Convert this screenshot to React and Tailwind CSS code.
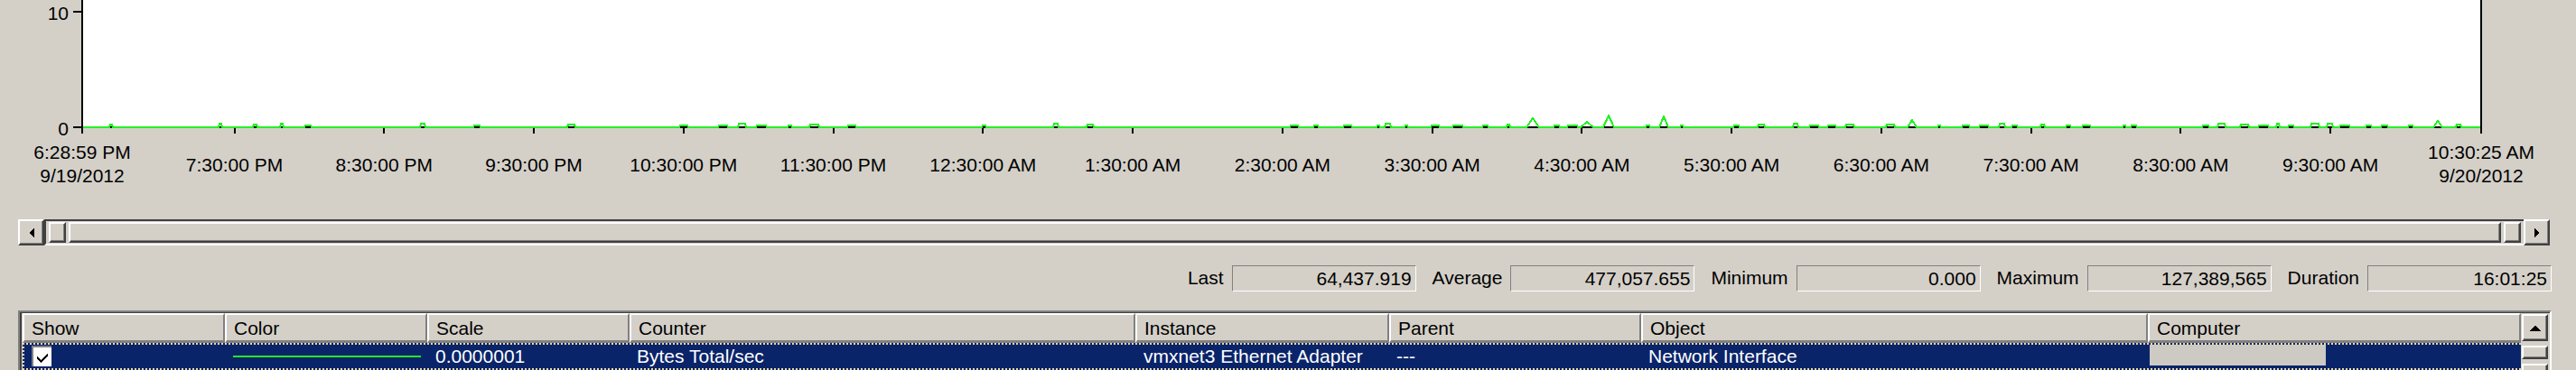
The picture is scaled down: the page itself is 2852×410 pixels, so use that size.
import React from 'react';

// time axis: 6:28:59 PM 9/19/2012 -> 10:30:25 AM 9/20/2012
const X0 = 91;
const X1 = 2747;
const SPAN = 57686;
const toX = (sec) => X0 + (sec / SPAN) * (X1 - X0);

const hours = [
  '7:30:00 PM', '8:30:00 PM', '9:30:00 PM', '10:30:00 PM', '11:30:00 PM',
  '12:30:00 AM', '1:30:00 AM', '2:30:00 AM', '3:30:00 AM', '4:30:00 AM',
  '5:30:00 AM', '6:30:00 AM', '7:30:00 AM', '8:30:00 AM', '9:30:00 AM',
];
const ticks = hours.map((label, k) => ({ label, x: toX(3661 + k * 3600) }));

const stats = [
  ['Last', '64,437.919'],
  ['Average', '477,057.655'],
  ['Minimum', '0.000'],
  ['Maximum', '127,389,565'],
  ['Duration', '16:01:25'],
];

const cols = [
  ['Show', 224], ['Color', 224], ['Scale', 224], ['Counter', 560],
  ['Instance', 281], ['Parent', 279], ['Object', 561], ['Computer', 413],
];

function makeRng(seed) {
  let s = seed;
  return () => {
    s = (s * 1664525 + 1013904223) % 4294967296;
    return s / 4294967296;
  };
}

function buildLine() {
  const r = makeRng(7);
  const regions = [
    [100, 500, 8], [500, 720, 2], [720, 930, 12], [930, 1100, 2],
    [1100, 1420, 2], [1420, 2000, 34], [2000, 2740, 44],
  ];
  let bumps = [];
  regions.forEach(([a, b, n]) => {
    for (let i = 0; i < n; i++) {
      const w = 4 + Math.floor(r() * 9);
      const h = r() < 0.7 ? 2 : 3 + Math.floor(r() * 2);
      bumps.push({ x: Math.round(a + r() * (b - a - w)), w, h, peak: false });
    }
  });
  [
    [1690, 14, 10], [1750, 14, 6], [1775, 12, 13], [1837, 10, 12],
    [2112, 10, 8], [2694, 10, 7], [2028, 12, 4],
  ].forEach(([x, w, h]) => bumps.push({ x, w, h, peak: true }));
  bumps.sort((p, q) => p.x - q.x);
  const kept = [];
  let last = 0;
  bumps.forEach((b) => {
    if (b.x > last + 2 && b.x + b.w < X1 - 3) {
      kept.push(b);
      last = b.x + b.w;
    }
  });
  const y = 141;
  const pts = [[92, y]];
  kept.forEach((b) => {
    pts.push([b.x, y]);
    if (b.peak) {
      pts.push([b.x + b.w / 2, y - b.h]);
    } else {
      pts.push([b.x + 1, y - b.h]);
      pts.push([b.x + b.w - 1, y - b.h]);
    }
    pts.push([b.x + b.w, y]);
  });
  pts.push([X1 - 1, y]);
  return pts.map((p) => p.join(',')).join(' ');
}

const linePoints = buildLine();

const raised =
  'bg-[#d4d0c8] border-t-2 border-l-2 border-white border-r-2 border-b-2 border-r-[#404040] border-b-[#404040] shadow-[inset_-1px_-1px_0_#808080]';

function Chart() {
  return (
    <div className="relative h-[243px]">
      <svg width="2852" height="160" className="block" shapeRendering="crispEdges">
        <rect x="92" y="0" width="2654" height="141" fill="#ffffff" />
        <rect x="90" y="0" width="2" height="148" fill="#000" />
        <rect x="2746" y="0" width="2" height="148" fill="#000" />
        <rect x="81" y="12" width="9" height="2" fill="#000" />
        <rect x="81" y="140" width="9" height="2" fill="#000" />
        <rect x="92" y="140" width="2654" height="2" fill="#000" />
        {ticks.map((t) => (
          <rect key={t.label} x={Math.round(t.x) - 1} y="142" width="2" height="6" fill="#000" />
        ))}
        <polyline points={linePoints} fill="none" stroke="#24f024" strokeWidth="2" />
      </svg>
      <div className="absolute left-0 top-[3px] w-[76px] text-right leading-[24px]">10</div>
      <div className="absolute left-0 top-[131px] w-[76px] text-right leading-[24px]">0</div>
      <div
        className="absolute top-[156px] -translate-x-1/2 text-center leading-[26px] whitespace-nowrap"
        style={{ left: X0 }}
      >
        <div>6:28:59 PM</div>
        <div>9/19/2012</div>
      </div>
      {ticks.map((t) => (
        <div
          key={t.label}
          className="absolute top-[171px] -translate-x-1/2 leading-[24px] whitespace-nowrap"
          style={{ left: t.x }}
        >
          {t.label}
        </div>
      ))}
      <div
        className="absolute top-[156px] -translate-x-1/2 text-center leading-[26px] whitespace-nowrap"
        style={{ left: X1 }}
      >
        <div>10:30:25 AM</div>
        <div>9/20/2012</div>
      </div>
    </div>
  );
}

function Arrow({ dir }) {
  return (
    <svg width="6" height="10" viewBox="0 0 6 10" shapeRendering="crispEdges">
      {dir === 'left' ? <path d="M6 0 L0 5 L6 10 Z" fill="#000" /> : <path d="M0 0 L6 5 L0 10 Z" fill="#000" />}
    </svg>
  );
}

function TimeScroll() {
  return (
    <div className="flex h-[29px] ml-[20px] w-[2803px]">
      <div className={`w-[29px] flex items-center justify-center ${raised}`}>
        <Arrow dir="left" />
      </div>
      <div className="flex-1 flex border-t-2 border-l-2 border-[#404040] border-b-2 border-b-white bg-[#d4d0c8] px-[3px] pt-[1px] pb-[1px]">
        <div className={`w-[19px] ${raised}`} />
        <div className="w-[3px]" />
        <div className={`flex-1 ${raised}`} />
        <div className="w-[3px]" />
        <div className={`w-[19px] ${raised}`} />
      </div>
      <div className={`w-[29px] flex items-center justify-center ${raised}`}>
        <Arrow dir="right" />
      </div>
    </div>
  );
}

function Stats() {
  return (
    <div className="flex h-[72px] items-center justify-end pr-[27px]">
      {stats.map(([label, value], i) => (
        <React.Fragment key={label}>
          <span className={i === 0 ? '' : 'ml-[18px]'}>{label}</span>
          <div className="ml-[9px] w-[204px] h-[29px] border-t border-l border-[#808080] border-r border-b border-r-white border-b-white text-right pr-[4px] leading-[27px]">
            {value}
          </div>
        </React.Fragment>
      ))}
    </div>
  );
}

function Check() {
  return (
    <div className="ml-[8px] mt-px w-[22px] h-[23px] bg-white border-t-2 border-l-2 border-[#808080] flex items-center justify-center">
      <svg width="14" height="12" viewBox="0 0 14 12" shapeRendering="crispEdges">
        <path d="M1 5 L5 9 L13 1 L13 4 L5 12 L1 8 Z" fill="#000" />
      </svg>
    </div>
  );
}

function Table() {
  return (
    <div className="ml-[20px] w-fit border-l-2 border-t-2 border-[#808080] border-r-2 border-r-white">
      <div className="flex border-l-2 border-t border-[#404040] pl-px">
        <div className="flex flex-col">
          <div className="flex">
            {cols.map(([name, w]) => (
              <div
                key={name}
                className="h-[33px] border-t-2 border-l-2 border-white border-r-2 border-b-[3px] border-r-[#808080] border-b-[#808080] pl-[8px] leading-[30px] whitespace-nowrap overflow-hidden"
                style={{ width: w }}
              >
                {name}
              </div>
            ))}
          </div>
          <div className="flex h-[30px] bg-[#0a246a] text-white border-y-2 border-l-2 border-dotted border-[#e8d9a8] items-center">
            <div className="w-[222px] h-full flex items-start">
              <Check />
            </div>
            <div className="w-[224px] flex items-center">
              <div className="ml-[9px] w-[208px] h-[2px] bg-[#24f024]" />
            </div>
            <div className="w-[224px] pl-[9px] leading-[24px]">0.0000001</div>
            <div className="w-[560px] pl-[8px] leading-[24px]">Bytes Total/sec</div>
            <div className="w-[281px] pl-[9px] leading-[24px] whitespace-nowrap">vmxnet3 Ethernet Adapter</div>
            <div className="w-[279px] pl-[8px] leading-[24px]">---</div>
            <div className="w-[561px] pl-[8px] leading-[24px]">Network Interface</div>
            <div className="w-[413px] h-full flex items-start">
              <div className="ml-[2px] w-[195px] h-[23px] bg-[#cdcac3]" />
            </div>
          </div>
        </div>
        <div className="w-[32px] flex flex-col pl-px pr-[2px] bg-[#d4d0c8]">
          <div className={`mt-[1px] h-[30px] flex items-center justify-center ${raised}`}>
            <svg width="12" height="7" viewBox="0 0 12 7" shapeRendering="crispEdges">
              <path d="M6 0 L12 7 L0 7 Z" fill="#000" />
            </svg>
          </div>
          <div className={`mt-[5px] h-[15px] ${raised}`} />
          <div className={`mt-[5px] h-[15px] ${raised}`} />
        </div>
      </div>
    </div>
  );
}

export default function App() {
  return (
    <div className="w-[2852px] h-[410px] overflow-hidden bg-[#d4d0c8] text-black text-[21px] font-['Liberation_Sans',Arial,sans-serif]">
      <Chart />
      <TimeScroll />
      <Stats />
      <Table />
    </div>
  );
}
